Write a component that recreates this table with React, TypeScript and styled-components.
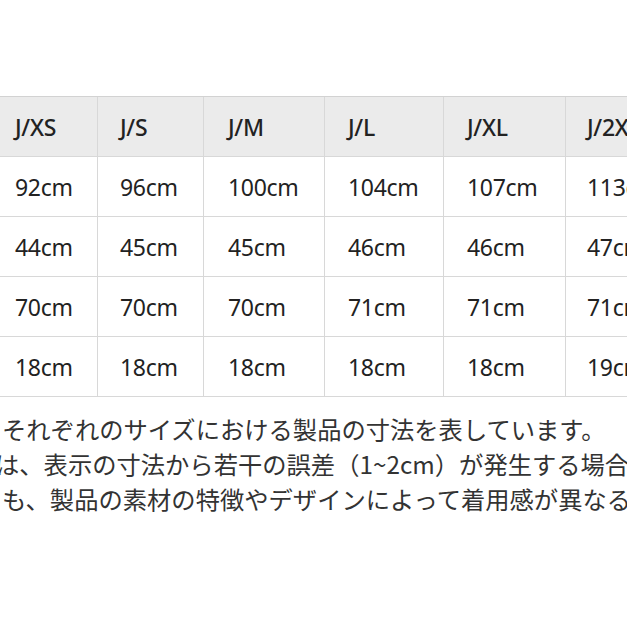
import React from "react";
import styled, { createGlobalStyle } from "styled-components";

const GlobalStyle = createGlobalStyle`
  html, body {
    margin: 0;
    padding: 0;
    background: #ffffff;
  }
  body {
    font-family: "Noto Sans", "Noto Sans CJK JP", sans-serif;
    color: #2b2b2b;
  }
`;

const Page = styled.div`
  width: 627px;
  height: 627px;
  overflow: hidden;
  padding-top: 96px;
  box-sizing: border-box;
  background: #ffffff;
`;

const Table = styled.div`
  display: grid;
  grid-template-columns: 105px 106px 121px 119px 122px 130px;
  width: max-content;
  margin-left: -7px;
  border-top: 1px solid #d2d2d2;
`;

const Cell = styled.div<{ $head?: boolean; $pad?: number }>`
  height: 59px;
  display: flex;
  align-items: center;
  padding-left: ${(p) => p.$pad ?? 23}px;
  border-right: 1px solid #d8d8d8;
  border-bottom: 1px solid #d8d8d8;
  background: ${(p) => (p.$head ? "#ebebeb" : "#ffffff")};
  font-size: 23px;
  font-weight: ${(p) => (p.$head ? 500 : 400)};
  letter-spacing: -0.3px;
  color: #222222;
  white-space: nowrap;
  overflow: hidden;
`;

const Notes = styled.div`
  padding-top: 14px;
  font-family: "Noto Sans CJK JP", sans-serif;
  font-size: 24.3px;
  line-height: 35px;
  color: #333333;
`;

const NoteLine = styled.div<{ $shift: number }>`
  white-space: nowrap;
  margin-left: ${(p) => p.$shift}px;
`;

const pads = [22, 22, 24, 23, 23, 21];

const sizes = ["J/XS", "J/S", "J/M", "J/L", "J/XL", "J/2XL"];
const rows = [
  ["92cm", "96cm", "100cm", "104cm", "107cm", "113cm"],
  ["44cm", "45cm", "45cm", "46cm", "46cm", "47cm"],
  ["70cm", "70cm", "70cm", "71cm", "71cm", "71cm"],
  ["18cm", "18cm", "18cm", "18cm", "18cm", "19cm"],
];

const notes: { text: string; shift: number }[] = [
  { text: "それぞれのサイズにおける製品の寸法を表しています。", shift: 2 },
  { text: "は、表示の寸法から若干の誤差（1~2cm）が発生する場合があります。", shift: -5 },
  { text: "も、製品の素材の特徴やデザインによって着用感が異なる場合があります。", shift: 2 },
];

export default function App() {
  return (
    <>
      <GlobalStyle />
      <Page>
        <Table>
          {sizes.map((s, i) => (
            <Cell key={s} $head $pad={pads[i]}>
              {s}
            </Cell>
          ))}
          {rows.map((r, ri) =>
            r.map((v, ci) => (
              <Cell key={`${ri}-${ci}`} $pad={pads[ci]}>
                {v}
              </Cell>
            ))
          )}
        </Table>
        <Notes>
          {notes.map((n, i) => (
            <NoteLine key={i} $shift={n.shift}>
              {n.text}
            </NoteLine>
          ))}
        </Notes>
      </Page>
    </>
  );
}
